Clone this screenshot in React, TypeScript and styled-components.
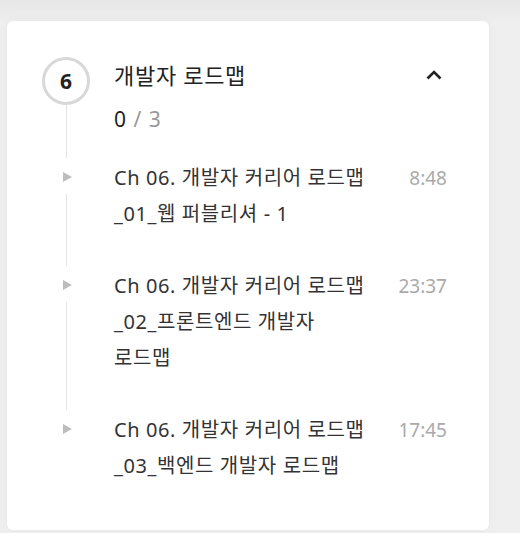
import styled, { createGlobalStyle } from "styled-components"

const GlobalStyle = createGlobalStyle`
  html, body {
    margin: 0;
    padding: 0;
    background: #efefef;
  }
  body {
    font-family: "Noto Sans", "Noto Sans CJK KR", sans-serif;
    color: #333;
  }
`

const Page = styled.div`
  min-height: 533px;
  padding: 21px 31px 3px 7px;
  box-sizing: border-box;
  background: linear-gradient(#e7e7e7, #efefef 24px);
`

const Card = styled.section`
  background: #fff;
  border-radius: 6px;
  padding: 36px 42px 10px 35px;
  box-shadow: 0 0 10px rgba(0, 0, 0, 0.04);
`

const Row = styled.div`
  display: grid;
  grid-template-columns: 48px 1fr auto;
  column-gap: 24px;
`

const Rail = styled.div`
  display: flex;
  flex-direction: column;
  align-items: center;
`

const Line = styled.div<{ $top: number }>`
  flex: 1;
  width: 1px;
  background: #e4e4e4;
  margin-top: ${({ $top }) => $top}px;
  margin-bottom: 2px;
`

const StepCircle = styled.div`
  width: 48px;
  height: 48px;
  box-sizing: border-box;
  border: 3px solid #d8d8d8;
  border-radius: 50%;
  display: flex;
  align-items: center;
  justify-content: center;
  font-size: 21px;
  font-weight: 700;
  color: #222;
`

const PlayMark = styled.span`
  margin-top: 12px;
  width: 0;
  height: 0;
  border-top: 5.5px solid transparent;
  border-bottom: 5.5px solid transparent;
  border-left: 9px solid #bdbdbd;
  margin-left: 3px;
`

const Header = styled.div`
  padding-bottom: 23px;
`

const Title = styled.h2`
  margin: 0;
  font-size: 22px;
  letter-spacing: 0.7px;
  font-weight: 400;
  line-height: 36px;
  color: #222;
`

const Progress = styled.div`
  margin-top: 8px;
  font-size: 21px;
  letter-spacing: 1px;
  line-height: 36px;
  color: #222;
`

const Total = styled.span`
  color: #999;
`

const Toggle = styled.button`
  border: 0;
  background: none;
  padding: 0;
  margin: 8px 3px 0 0;
  width: 20px;
  height: 20px;
  display: flex;
  align-items: center;
  justify-content: center;
  align-self: start;
  cursor: pointer;
`

const LessonTitle = styled.div`
  font-size: 20px;
  letter-spacing: 0.6px;
  line-height: 36px;
  color: #333;
  padding-bottom: 36px;
  word-break: keep-all;
`

const Duration = styled.span`
  min-width: 50px;
  font-size: 19px;
  line-height: 36px;
  color: #aaa;
  text-align: right;
`

type Lesson = {
  title: string
  duration: string
}

const lessons: Lesson[] = [
  { title: "Ch 06. 개발자 커리어 로드맵 _01_웹 퍼블리셔 - 1", duration: "8:48" },
  { title: "Ch 06. 개발자 커리어 로드맵 _02_프론트엔드 개발자 로드맵", duration: "23:37" },
  { title: "Ch 06. 개발자 커리어 로드맵 _03_백엔드 개발자 로드맵", duration: "17:45" },
]

export default function App() {
  return (
    <>
      <GlobalStyle />
      <Page>
        <Card>
          <Row>
            <Rail>
              <StepCircle>6</StepCircle>
              <Line $top={0} />
            </Rail>
            <Header>
              <Title>개발자 로드맵</Title>
              <Progress>
                0 <Total>/ 3</Total>
              </Progress>
            </Header>
            <Toggle aria-label="접기">
              <svg width="16" height="10" viewBox="0 0 16 10">
                <path d="M1.5 8.5 L8 2 L14.5 8.5" fill="none" stroke="#222" strokeWidth="2.6" />
              </svg>
            </Toggle>
          </Row>
          {lessons.map((lesson, i) => (
            <Row key={lesson.duration}>
              <Rail>
                <PlayMark />
                {i < lessons.length - 1 && <Line $top={12} />}
              </Rail>
              <LessonTitle>{lesson.title}</LessonTitle>
              <Duration>{lesson.duration}</Duration>
            </Row>
          ))}
        </Card>
      </Page>
    </>
  )
}
